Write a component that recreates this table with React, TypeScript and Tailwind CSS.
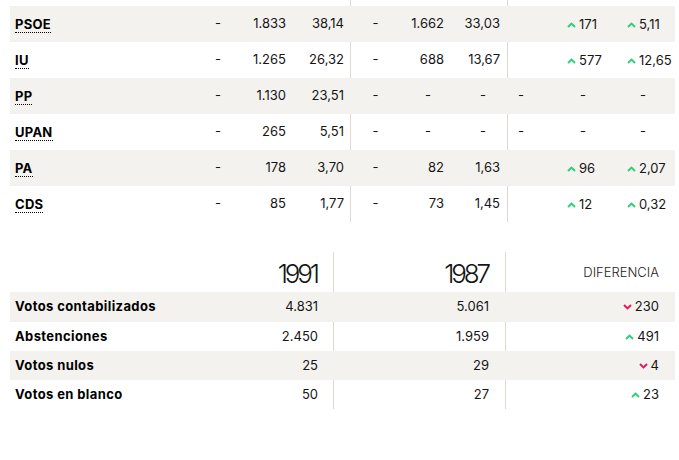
import React from "react";

type Diff = { dir: "up" | "down"; value: string } | "-" | "";

interface PartyRow {
  name: string;
  a: string;
  votes91: string;
  pct91: string;
  b: string;
  votes87: string;
  pct87: string;
  c: string;
  dVotes: Diff;
  dPct: Diff;
}

const parties: PartyRow[] = [
  { name: "PSOE", a: "-", votes91: "1.833", pct91: "38,14", b: "-", votes87: "1.662", pct87: "33,03", c: "", dVotes: { dir: "up", value: "171" }, dPct: { dir: "up", value: "5,11" } },
  { name: "IU", a: "-", votes91: "1.265", pct91: "26,32", b: "-", votes87: "688", pct87: "13,67", c: "", dVotes: { dir: "up", value: "577" }, dPct: { dir: "up", value: "12,65" } },
  { name: "PP", a: "-", votes91: "1.130", pct91: "23,51", b: "-", votes87: "-", pct87: "-", c: "-", dVotes: "-", dPct: "-" },
  { name: "UPAN", a: "-", votes91: "265", pct91: "5,51", b: "-", votes87: "-", pct87: "-", c: "-", dVotes: "-", dPct: "-" },
  { name: "PA", a: "-", votes91: "178", pct91: "3,70", b: "-", votes87: "82", pct87: "1,63", c: "", dVotes: { dir: "up", value: "96" }, dPct: { dir: "up", value: "2,07" } },
  { name: "CDS", a: "-", votes91: "85", pct91: "1,77", b: "-", votes87: "73", pct87: "1,45", c: "", dVotes: { dir: "up", value: "12" }, dPct: { dir: "up", value: "0,32" } },
];

const totals = [
  { label: "Votos contabilizados", y91: "4.831", y87: "5.061", diff: { dir: "down" as const, value: "230" } },
  { label: "Abstenciones", y91: "2.450", y87: "1.959", diff: { dir: "up" as const, value: "491" } },
  { label: "Votos nulos", y91: "25", y87: "29", diff: { dir: "down" as const, value: "4" } },
  { label: "Votos en blanco", y91: "50", y87: "27", diff: { dir: "up" as const, value: "23" } },
];

function Chevron({ dir }: { dir: "up" | "down" }) {
  return (
    <svg width="9" height="6" viewBox="0 0 9 6" className="mr-[3px] shrink-0">
      {dir === "up" ? (
        <path d="M1 5 L4.5 1.6 L8 5" fill="none" stroke="#2fd07a" strokeWidth="2" />
      ) : (
        <path d="M1 1 L4.5 4.4 L8 1" fill="none" stroke="#e8185c" strokeWidth="2" />
      )}
    </svg>
  );
}

function DiffValue({ d }: { d: { dir: "up" | "down"; value: string } }) {
  return (
    <span className="inline-flex items-center">
      <Chevron dir={d.dir} />
      <span>{d.value}</span>
    </span>
  );
}

export default function App() {
  return (
    <div
      className="w-[679px] h-[460px] bg-white text-[#151515] text-[13px] overflow-hidden"
      style={{ fontFamily: "Inter, 'Noto Sans', sans-serif" }}
    >
      {/* Party results */}
      <div className="pl-[10px] pr-[4px]">
        <div className="flex h-[6px]">
          <div className="w-[341px] border-r border-[#ddd8d0]" />
          <div className="w-[157px] border-r border-[#ddd8d0]" />
        </div>
        {parties.map((p, i) => {
          const gray = i % 2 === 0;
          const line = gray ? "border-transparent" : "border-[#ddd8d0]";
          return (
            <div key={p.name} className={`flex items-center h-[36px] ${gray ? "bg-[#f3f2ef]" : ""}`}>
              <div className="w-[180px] pl-[5px] flex items-center h-full">
                <span className="inline-block font-bold text-black tracking-[0.02em] leading-[16px] border-b border-dotted border-black">
                  {p.name}
                </span>
              </div>
              <div className="w-[56px] text-center">{p.a}</div>
              <div className="w-[46px] text-right pr-[6px]">{p.votes91}</div>
              <div className={`w-[59px] h-full flex items-center justify-end pr-[6px] border-r ${line}`}>
                {p.pct91}
              </div>
              <div className="w-[49px] text-center">{p.b}</div>
              <div className={`w-[50px] text-right ${p.votes87 === "-" ? "pr-[19px]" : "pr-[6px]"}`}>{p.votes87}</div>
              <div className={`w-[58px] h-full flex items-center justify-end border-r ${line} ${p.pct87 === "-" ? "pr-[21px]" : "pr-[7px]"}`}>
                {p.pct87}
              </div>
              <div className="w-[26px] text-center">{p.c}</div>
              <div className={`w-[86px] ${p.dVotes === "-" ? "pl-[46px]" : "pl-[33px]"}`}>
                {p.dVotes === "-" || p.dVotes === "" ? p.dVotes : <DiffValue d={p.dVotes} />}
              </div>
              <div className={`flex-1 ${p.dPct === "-" ? "pl-[20px]" : "pl-[7px]"}`}>
                {p.dPct === "-" || p.dPct === "" ? p.dPct : <DiffValue d={p.dPct} />}
              </div>
            </div>
          );
        })}
      </div>

      {/* Totals */}
      <div className="mt-[30px] pl-[10px] pr-[4px]">
        <div className="flex h-[40px] items-center">
          <div className="w-[190px]" />
          <div className="w-[134px] h-full flex items-center justify-end pr-[16px] pt-[4px] border-r border-[#ddd8d0] text-[26px] font-light tracking-[-0.12em] leading-none">
            1991
          </div>
          <div className="w-[172px] h-full flex items-center justify-end pr-[17px] pt-[4px] border-r border-[#ddd8d0] text-[26px] font-light tracking-[-0.12em] leading-none">
            1987
          </div>
          <div className="flex-1 h-full flex items-center justify-end pr-[16px] pt-[2px] text-[13px] font-light text-[#222]">
            DIFERENCIA
          </div>
        </div>
        {totals.map((t, i) => {
          const gray = i % 2 === 0;
          const line = gray ? "border-transparent" : "border-[#ddd8d0]";
          return (
            <div
              key={t.label}
              className={`flex items-center ${i === 0 ? "h-[30px]" : "h-[29px]"} ${gray ? "bg-[#f3f2ef]" : ""}`}
            >
              <div className="w-[190px] pl-[5px] font-bold text-black tracking-[0.03em]">{t.label}</div>
              <div className={`w-[134px] h-full flex items-center justify-end pr-[15px] border-r ${line}`}>{t.y91}</div>
              <div className={`w-[172px] h-full flex items-center justify-end pr-[16px] border-r ${line}`}>{t.y87}</div>
              <div className="flex-1 flex justify-end pr-[16px]">
                <DiffValue d={t.diff} />
              </div>
            </div>
          );
        })}
      </div>
    </div>
  );
}
